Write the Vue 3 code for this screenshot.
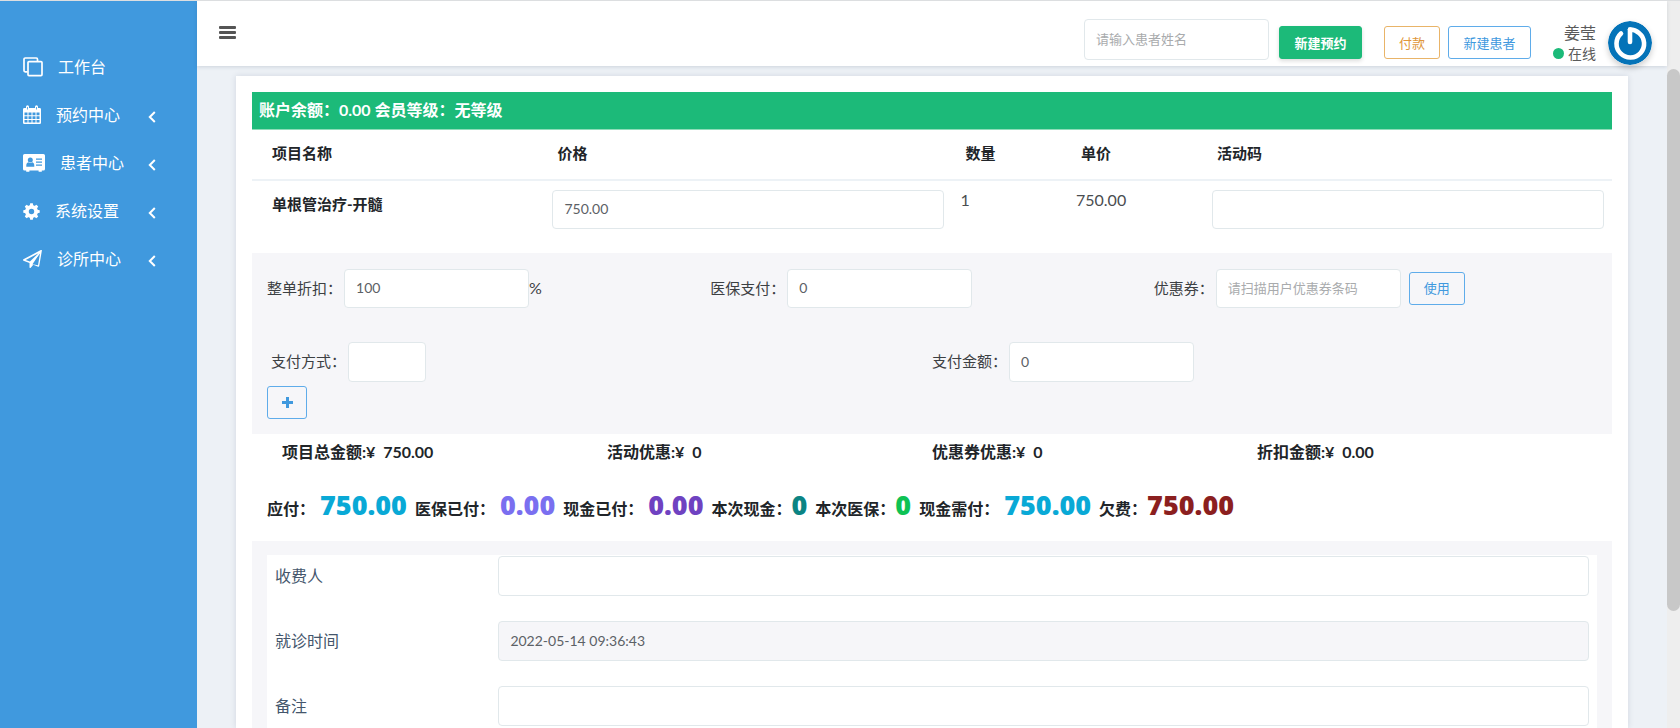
<script setup>
import { ref } from 'vue'

const menu = [
  { icon: 'copy', width: 20, label: '工作台', sub: false },
  { icon: 'calendar', width: 18, label: '预约中心', sub: true },
  { icon: 'card', width: 22, label: '患者中心', sub: true },
  { icon: 'gear', width: 17, label: '系统设置', sub: true },
  { icon: 'plane', width: 19, label: '诊所中心', sub: true }
]

const teeth = [0, 45, 90, 135, 180, 225, 270, 315]

const items = ref([{ name: '单根管治疗-开髓', price: '750.00', count: 1, unit: '750.00', code: '' }])

const totals = [
  { label: '项目总金额:', value: '750.00' },
  { label: '活动优惠:', value: '0' },
  { label: '优惠券优惠:', value: '0' },
  { label: '折扣金额:', value: '0.00' }
]

const sums = [
  { label: '应付：', value: '750.00', tone: 'cyan', spaced: true },
  { label: '医保已付：', value: '0.00', tone: 'violet', spaced: true },
  { label: '现金已付：', value: '0.00', tone: 'purple', spaced: true },
  { label: '本次现金：', value: '0', tone: 'teal', spaced: false },
  { label: '本次医保：', value: '0', tone: 'green', spaced: false },
  { label: '现金需付：', value: '750.00', tone: 'cyan', spaced: true },
  { label: '欠费：', value: '750.00', tone: 'red', spaced: false }
]

const search = ref('')
const discount = ref('100')
const insurance = ref('0')
const coupon = ref('')
const payMethod = ref('')
const payAmount = ref('0')
const cashier = ref('')
const visitTime = ref('2022-05-14 09:36:43')
const remark = ref('')
</script>

<template>
  <div class="page">
    <nav class="sidebar">
      <a v-for="m in menu" :key="m.label" href="#" class="menu-item">
        <svg v-if="m.icon === 'copy'" width="20" height="20" viewBox="0 0 20 20" fill="none" stroke="#fff" stroke-width="1.7">
          <path d="M4.500 14.800H2.200A1.200 1.200 0 0 1 1 13.600V2.200A1.200 1.200 0 0 1 2.200 1H13.300A1.200 1.200 0 0 1 14.500 2.200V4.300" />
          <rect x="5" y="4.600" width="14" height="14" rx="1" />
        </svg>
        <svg v-else-if="m.icon === 'calendar'" width="18" height="20" viewBox="0 0 18 20">
          <path fill="#fff" fill-rule="evenodd" d="M1.300 3H3V1.800a1.500 1.500 0 0 1 3 0V3h6V1.800a1.500 1.500 0 0 1 3 0V3h1.700A1.300 1.300 0 0 1 18 4.300v13.400a1.300 1.300 0 0 1-1.300 1.300H1.300A1.300 1.300 0 0 1 0 17.700V4.300A1.300 1.300 0 0 1 1.300 3zM1.500 7.500v2.800h3V7.500zm4 0v2.800h3V7.500zm4 0v2.800h3V7.500zm4 0v2.800h3V7.500zM1.500 11.300v2.800h3v-2.800zm4 0v2.800h3v-2.800zm4 0v2.800h3v-2.800zm4 0v2.800h3v-2.800zM1.500 15.100v2.500h3v-2.500zm4 0v2.500h3v-2.500zm4 0v2.500h3v-2.500zm4 0v2.500h3v-2.500z" />
          <path d="M4.500 2v2.500M13.500 2v2.500" stroke="#4099de" stroke-width="0.800" />
        </svg>
        <svg v-else-if="m.icon === 'card'" width="22" height="18" viewBox="0 0 22 18">
          <path fill="#fff" d="M1.600 0H20.400A1.600 1.600 0 0 1 22 1.600V15a1.600 1.600 0 0 1-1.600 1.600H18.800v1.200H15.600v-1.200H6.400v1.200H3.200v-1.200H1.600A1.600 1.600 0 0 1 0 15V1.600A1.600 1.600 0 0 1 1.600 0z" />
          <g fill="#4099de">
            <circle cx="7.300" cy="6" r="2.500" />
            <path d="M3.300 12.700c-.3-2.700.8-4.200 2-4.400 1.300.9 2.700.9 4 0 1.200.2 2.300 1.700 2 4.400z" />
            <path d="M13 4.500h6v1.200h-6zM13 7.500h6v1.200h-6zM13 10.500h6v1.200h-6z" />
          </g>
        </svg>
        <svg v-else-if="m.icon === 'gear'" width="17" height="17" viewBox="0 0 17 17">
          <circle cx="8.500" cy="8.500" r="4.600" fill="none" stroke="#fff" stroke-width="3.800" />
          <path v-for="t in teeth" :key="t" fill="#fff" d="M6.700 3 7.200 0.300h2.600L10.300 3z" :transform="`rotate(${t} 8.5 8.5)`" />
        </svg>
        <svg v-else width="19" height="18" viewBox="0 0 19 18" fill="#fff">
          <path fill-rule="evenodd" d="M18.900.6 16.200 16.100a.8.800 0 0 1-1.100.6l-4.800-2-2.600 3.100a.7.700 0 0 1-1.200-.5v-4.200L.5 10.700a.8.800 0 0 1-.1-1.400L17.800.1a.7.700 0 0 1 1.100.5zM2.700 9.900l4.200 1.700L15.600 3.200zM8 14.100l7 1.100L17 3.600z" />
          <path d="M7.300 12.300 17 2.800 10 13.600 7.600 17z" />
        </svg>
        <span class="menu-label">{{ m.label }}</span>
        <svg v-if="m.sub" class="chevron" width="8" height="12" viewBox="0 0 8 12" fill="none" stroke="#fff" stroke-width="2">
          <path d="M6.800 1 1.800 6l5 5" />
        </svg>
      </a>
    </nav>

    <div class="main">
      <header class="topbar">
        <button class="burger" type="button" aria-label="菜单"><i></i><i></i><i></i></button>
        <input v-model="search" class="field search" type="text" placeholder="请输入患者姓名" aria-label="请输入患者姓名" />
        <button class="btn solid" type="button">新建预约</button>
        <button class="btn orange" type="button">付款</button>
        <button class="btn blue create" type="button">新建患者</button>
        <div class="user">
          <span class="name">姜莹</span>
          <span class="status"><i class="dot"></i>在线</span>
        </div>
        <svg class="avatar" width="44" height="44" viewBox="0 0 44 44">
          <circle cx="22" cy="22" r="22" fill="#0473b8" />
          <path d="M22 8.500V21" stroke="#fff" stroke-width="4.600" stroke-linecap="round" fill="none" />
          <path d="M13 12.500A13.800 13.800 0 1 0 31 12a13.500 13.500 0 0 0-9-3.500" stroke="#fff" stroke-width="4.600" stroke-linecap="round" fill="none" />
        </svg>
      </header>

      <main class="content">
        <section class="card">
          <div class="banner">账户余额：0.00 会员等级：无等级</div>

          <table class="items">
            <colgroup>
              <col class="c-name" /><col class="c-wide" /><col class="c-count" /><col class="c-unit" /><col class="c-wide" />
            </colgroup>
            <thead>
              <tr><th>项目名称</th><th>价格</th><th>数量</th><th>单价</th><th>活动码</th></tr>
            </thead>
            <tbody>
              <tr v-for="it in items" :key="it.name">
                <th scope="row">{{ it.name }}</th>
                <td><input v-model="it.price" class="field" type="text" aria-label="价格" /></td>
                <td>{{ it.count }}</td>
                <td>{{ it.unit }}</td>
                <td><input v-model="it.code" class="field" type="text" aria-label="活动码" /></td>
              </tr>
            </tbody>
          </table>

          <div class="panel">
            <div class="thirds">
              <div class="cell">
                <label for="discount">整单折扣：</label>
                <input id="discount" v-model="discount" class="field mid" type="text" />
                <span>%</span>
              </div>
              <div class="cell">
                <label for="insurance">医保支付：</label>
                <input id="insurance" v-model="insurance" class="field mid" type="text" />
              </div>
              <div class="cell">
                <label for="coupon">优惠券：</label>
                <input id="coupon" v-model="coupon" class="field mid" type="text" placeholder="请扫描用户优惠券条码" />
                <button class="btn blue use" type="button">使用</button>
              </div>
            </div>
            <div class="halves">
              <div class="cell inset">
                <label for="method">支付方式：</label>
                <input id="method" v-model="payMethod" class="field tall short" type="text" />
              </div>
              <div class="cell">
                <label for="amount">支付金额：</label>
                <input id="amount" v-model="payAmount" class="field tall mid" type="text" />
              </div>
            </div>
            <button class="btn blue add" type="button" aria-label="添加">
              <svg width="11" height="11" viewBox="0 0 11 11"><path d="M5.500 0v11M0 5.500h11" stroke="#4099de" stroke-width="3" /></svg>
            </button>
          </div>

          <div class="totals">
            <div v-for="t in totals" :key="t.label">{{ t.label }}¥&nbsp; {{ t.value }}</div>
          </div>

          <div class="sums">
            <div v-for="s in sums" :key="s.label" class="sum">
              <span>{{ s.label }}</span><b :class="[s.tone, { spaced: s.spaced }]">{{ s.value }}</b>
            </div>
          </div>

          <div class="panel lower">
            <div class="form">
              <div class="row">
                <label for="cashier">收费人</label>
                <input id="cashier" v-model="cashier" class="field tall" type="text" />
              </div>
              <div class="row">
                <label for="time">就诊时间</label>
                <input id="time" v-model="visitTime" class="field tall" type="text" readonly />
              </div>
              <div class="row">
                <label for="remark">备注</label>
                <input id="remark" v-model="remark" class="field tall" type="text" />
              </div>
            </div>
          </div>
        </section>
      </main>
    </div>

    <div class="scrollbar" aria-hidden="true"><div class="thumb"></div></div>
  </div>
</template>

<style>
body {
  margin: 0;
  overflow: hidden;
}
</style>

<style scoped>
* {
  box-sizing: border-box;
}

.page {
  display: flex;
  height: 100vh;
  overflow: hidden;
  border-top: 1px solid #dcdee0;
  background: #edf1f6;
  color: #212529;
  font-family: Lato, "Noto Sans CJK SC", sans-serif;
  font-size: 16px;
  line-height: 24px;
}

.sidebar {
  flex: none;
  width: 197px;
  padding-top: 42px;
  background: #4099de;
}

.menu-item {
  display: flex;
  align-items: center;
  height: 48px;
  padding: 0 41px 0 23px;
  color: #fff;
  text-decoration: none;
}

.menu-label {
  margin-left: 15px;
}

.chevron {
  margin-top: 4px;
  margin-left: auto;
}

.main {
  display: flex;
  flex: 1;
  flex-direction: column;
  min-width: 0;
}

.topbar {
  display: flex;
  z-index: 1;
  flex: none;
  align-items: center;
  height: 65px;
  padding: 18px 15px 0 22px;
  background: #fff;
  box-shadow: 0 1px 4px rgba(40, 60, 90, 0.16);
}

.burger {
  display: flex;
  flex-direction: column;
  gap: 2px;
  width: 17px;
  margin-right: auto;
  margin-bottom: 20px;
  padding: 0;
  border: 0;
  background: none;
}

.burger i {
  height: 3px;
  border-radius: 1px;
  background: #555;
}

.field {
  display: block;
  width: 100%;
  height: 39px;
  padding: 0 11px 2px;
  border: 1px solid #e1e8eb;
  border-radius: 4px;
  outline: 0;
  background: #fff;
  color: #5c6166;
  font-family: inherit;
  font-size: 14px;
}

.field::placeholder {
  color: #a9abad;
  font-size: 13px;
  opacity: 1;
}

.field[readonly] {
  background: #f6f6f9;
}

.tall {
  height: 40px;
}

.mid {
  width: 185px;
}

.short {
  width: 78px;
}

.search {
  width: 185px;
  height: 41px;
  margin-right: 10px;
  margin-bottom: 6px;
}

.btn {
  height: 33px;
  padding: 0;
  border: 1px solid;
  border-radius: 3px;
  background: transparent;
  font-family: inherit;
  font-size: 13px;
  line-height: 20px;
}

.solid {
  width: 83px;
  margin-right: 22px;
  border-color: #1cba79;
  background: #1cba79;
  box-shadow: 0 2px 4px rgba(0, 0, 0, 0.14);
  color: #fff;
  font-weight: 700;
}

.orange {
  width: 56px;
  margin-right: 8px;
  border-color: #e9b468;
  color: #e0963a;
}

.blue {
  border-color: #5facea;
  color: #4099de;
}

.create {
  width: 83px;
  margin-right: 22px;
}

.user {
  display: flex;
  flex-direction: column;
  align-items: flex-end;
  margin-right: 12px;
  color: #5a5a5a;
}

.name {
  height: 22px;
  line-height: 22px;
}

.status {
  display: flex;
  align-items: center;
  gap: 4px;
  height: 20px;
  font-size: 14px;
  line-height: 20px;
}

.dot {
  width: 11px;
  height: 11px;
  border-radius: 50%;
  background: #1cba79;
}

.avatar {
  flex: none;
  border-radius: 50%;
  box-shadow: 0 3px 6px rgba(0, 0, 0, 0.2);
}

.content {
  flex: 1;
  min-height: 0;
  padding: 10px 39px 0;
}

.card {
  height: 100%;
  padding: 16px 16px 0;
  overflow: hidden;
  background: #fff;
  box-shadow: 0 0 6px rgba(40, 60, 90, 0.14);
}

.banner {
  height: 38px;
  padding: 0 7px;
  border-bottom: 1px solid #8fdcb9;
  background: #1cba79;
  color: #fff;
  font-weight: 700;
  line-height: 36px;
}

.items {
  width: 100%;
  border-collapse: collapse;
  table-layout: fixed;
}

.c-name {
  width: 21.5%;
}

.c-wide {
  width: 30%;
}

.c-count {
  width: 8.5%;
}

.c-unit {
  width: 10%;
}

.items th {
  padding: 11px 13px;
  font-size: 15px;
  font-weight: 700;
  text-align: left;
  vertical-align: top;
}

.items th:first-child {
  padding-left: 20px;
}

.items thead th {
  height: 50px;
  border-bottom: 2px solid #edf2f6;
}

.items td {
  height: 73px;
  padding: 9px 8px 8px;
  color: #4a4d50;
  line-height: 20px;
  vertical-align: top;
}

.panel {
  padding: 16px 15px 15px;
  background: #f6f6f9;
}

.thirds {
  display: grid;
  grid-template-columns: repeat(3, 1fr);
}

.halves {
  display: grid;
  grid-template-columns: repeat(2, 1fr);
  margin-top: 34px;
}

.cell {
  display: flex;
  align-items: center;
  color: #3c4043;
}

.cell label,
.cell span {
  padding-bottom: 2px;
}

.cell label {
  margin-right: 2px;
  font-size: 15px;
}

.inset {
  padding-left: 4px;
}

.use {
  width: 56px;
  margin-left: 8px;
  padding-bottom: 2px;
}

.add {
  display: flex;
  align-items: center;
  justify-content: center;
  width: 40px;
  margin-top: 4px;
}

.totals {
  display: grid;
  grid-template-columns: repeat(4, 1fr);
  height: 37px;
  padding: 0 30px;
  font-weight: 700;
  line-height: 35px;
}

.sums {
  display: flex;
  flex-wrap: wrap;
  align-items: center;
  gap: 8px;
  height: 70px;
  padding: 0 15px 3px;
}

.sum {
  display: flex;
  align-items: baseline;
  font-weight: 700;
}

.sum b {
  font-family: "Open Sans", Lato, sans-serif;
  font-size: 27px;
  font-weight: 800;
  line-height: 36px;
}

.spaced {
  margin-left: 5px;
}

.cyan {
  color: #09a9d6;
}

.violet {
  color: #7a6ff0;
}

.purple {
  color: #6f42c1;
}

.teal {
  color: #0b8484;
}

.green {
  color: #0ec254;
}

.red {
  color: #8b1f1f;
}

.lower {
  padding-top: 14px;
}

.form {
  display: flex;
  flex-direction: column;
  gap: 25px;
  padding: 1px 8px 60px;
  background: #fff;
}

.row {
  display: grid;
  grid-template-columns: 17% 1fr;
  align-items: center;
  color: #44566c;
}

.scrollbar {
  flex: none;
  width: 13px;
  height: 100%;
  background: #eee;
}

.thumb {
  height: 74.5%;
  margin-top: 68px;
  border-radius: 7px;
  background: #c8c8c8;
}
</style>
